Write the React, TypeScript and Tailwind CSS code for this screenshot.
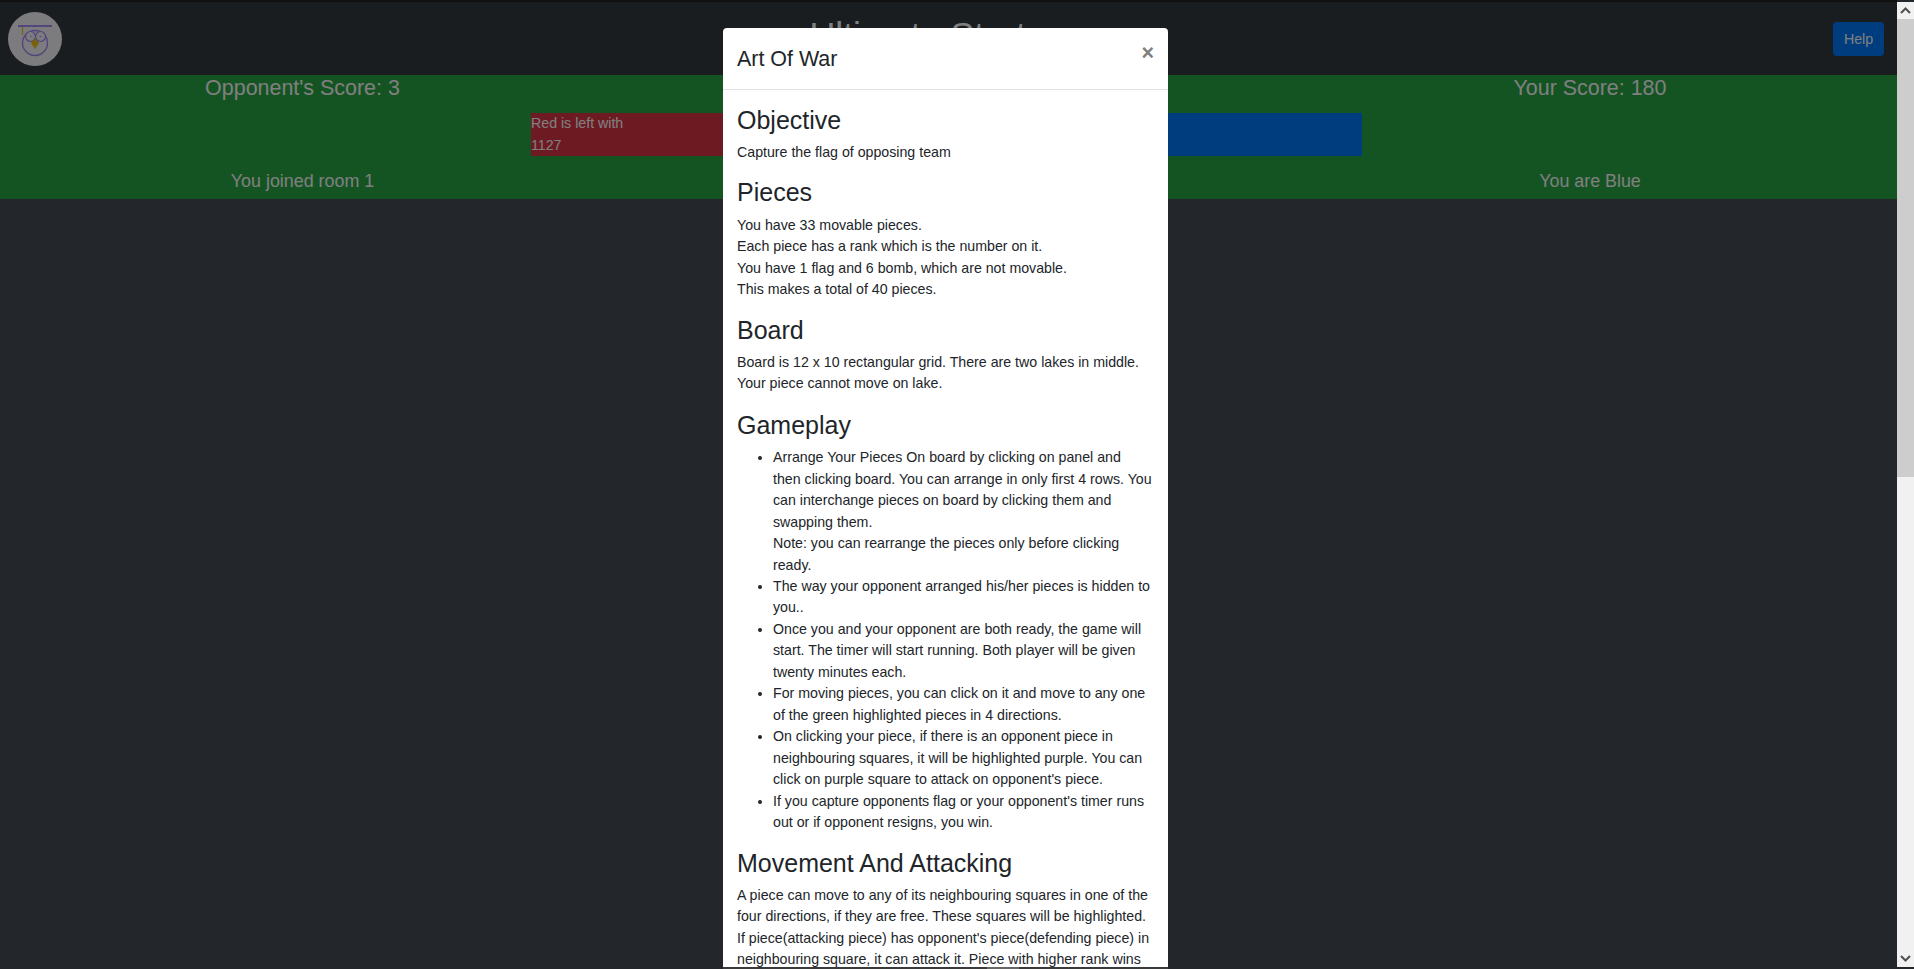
import React from "react";

const gameplay: string[][] = [
  [
    "Arrange Your Pieces On board by clicking on panel and",
    "then clicking board. You can arrange in only first 4 rows. You can interchange pieces on board by clicking them and swapping them.",
    "Note: you can rearrange the pieces only before clicking ready.",
  ],
  ["The way your opponent arranged his/her pieces is hidden to you.."],
  ["Once you and your opponent are both ready, the game will start. The timer will start running. Both player will be given twenty minutes each."],
  ["For moving pieces, you can click on it and move to any one of the green highlighted pieces in 4 directions."],
  ["On clicking your piece, if there is an opponent piece in neighbouring squares, it will be highlighted purple. You can click on purple square to attack on opponent's piece."],
  ["If you capture opponents flag or your opponent's timer runs out or if opponent resigns, you win."],
];

function OwlLogo() {
  return (
    <svg viewBox="0 0 54 54" className="w-[54px] h-[54px] rounded-full bg-[#f8f8ff] shrink-0">
      <rect x="10" y="13" width="34" height="2" fill="#a68cf8" />
      <path d="M14.5 15v8" stroke="#f5c518" strokeWidth="1.2" fill="none" />
      <circle cx="27" cy="31" r="12.5" stroke="#a68cf8" strokeWidth="1.4" fill="none" />
      <circle cx="22.5" cy="24.5" r="5" stroke="#a68cf8" strokeWidth="1.2" fill="#f8f8ff" />
      <circle cx="32.5" cy="24.5" r="5" stroke="#a68cf8" strokeWidth="1.2" fill="#f8f8ff" />
      <path d="M22 24.5h1.5M31.5 24.5h2" stroke="#a68cf8" strokeWidth="1.2" fill="none" />
      <path d="M27 26.5l4 4.5-4 6-4-6z" fill="#f5c518" />
    </svg>
  );
}

function Arrow({ up }: { up: boolean }) {
  return (
    <svg viewBox="0 0 17 17" className="w-[17px] h-[17px]">
      <path d={up ? "M4 11l4.5-4.5L13 11" : "M4 6l4.5 4.5L13 6"} stroke="#505050" strokeWidth="2" fill="none" />
    </svg>
  );
}

export default function App() {
  return (
    <div className="h-[969px] overflow-hidden bg-[#464e56] text-white font-['Liberation_Sans',Arial,sans-serif] text-[14.2px] leading-[21.45px]">
      <div className="mr-[17px]">
        <nav className="h-[75px] bg-[#343a40] border-t-2 border-[#222] flex items-center justify-between pl-2 pr-[13px]">
          <OwlLogo />
          <h1 className="text-[35.75px] leading-[43px] text-white mb-[7px]">Ultimate Stratego</h1>
          <button className="h-[34px] w-[51px] pt-[2px] rounded-[4px] bg-[#007bff] text-white text-[14.2px]">Help</button>
        </nav>
        <section className="h-[124px] pt-px bg-[#28a745]">
          <div className="flex">
            <h4 className="w-[605px] text-center text-[21.45px] leading-[25.74px]">Opponent's Score: 3</h4>
            <div className="flex-1" />
            <h4 className="w-[614px] text-center text-[21.45px] leading-[25.74px]">Your Score: 180</h4>
          </div>
          <div className="flex mt-[11px] ml-[531px] w-[831px] h-[43px]">
            <div className="w-[415px] bg-[#dc3545]">
              <div>Red is left with</div>
              <div className="mt-px">1127</div>
            </div>
            <div className="flex-1 bg-[#007bff]" />
          </div>
          <div className="flex mt-[15px]">
            <h5 className="w-[605px] text-center text-[17.875px] leading-[21.45px]">You joined room 1</h5>
            <div className="flex-1" />
            <h5 className="w-[614px] text-center text-[17.875px] leading-[21.45px]">You are Blue</h5>
          </div>
        </section>
      </div>

      {/* backdrop */}
      <div className="fixed inset-0 bg-black/50" />

      {/* modal, clipped by the window */}
      <div className="fixed top-0 left-0 right-0 h-[967px] overflow-hidden">
        <div className="mt-[28px] ml-[723px] w-[445px] bg-white text-[#212529] rounded-[4px]">
          <div className="flex justify-between h-[62px] border-b border-[#dee2e6] pl-[14px] pr-[14px] pt-[15px]">
            <h4 className="text-[21.45px] leading-[32px]">Art Of War</h4>
            <span className="text-[21.45px] leading-[32px] -mt-[6px] font-bold text-[#7f7f7f]">×</span>
          </div>
          <div className="px-[14px] pt-[14.5px]">
            <h3 className="text-[25px] leading-[30.03px] mb-[7.15px]">Objective</h3>
            <p className="mb-[14.3px]">Capture the flag of opposing team</p>
            <h3 className="text-[25px] leading-[30.03px] mb-[7.15px]">Pieces</h3>
            <p className="mb-[14.3px]">
              You have 33 movable pieces.
              <br />
              Each piece has a rank which is the number on it.
              <br />
              You have 1 flag and 6 bomb, which are not movable.
              <br />
              This makes a total of 40 pieces.
            </p>
            <h3 className="text-[25px] leading-[30.03px] mb-[7.15px]">Board</h3>
            <p className="mb-[15.3px]">Board is 12 x 10 rectangular grid. There are two lakes in middle. Your piece cannot move on lake.</p>
            <h3 className="text-[25px] leading-[30.03px] mb-[7.15px]">Gameplay</h3>
            <ul className="list-disc pl-[36px] mb-[14.3px]">
              {gameplay.map((lines, i) => (
                <li key={i}>
                  {lines.map((line, j) => (
                    <div key={j}>{line}</div>
                  ))}
                </li>
              ))}
            </ul>
            <h3 className="text-[25px] leading-[30.03px] mb-[7.15px]">Movement And Attacking</h3>
            <p>
              A piece can move to any of its neighbouring squares in one of the four directions, if they are free. These squares will be highlighted. If piece(attacking piece) has opponent's piece(defending piece) in neighbouring square, it can attack it. Piece with higher rank wins
            </p>
          </div>
        </div>
      </div>

      {/* strip along the bottom edge of the window */}
      <div className="fixed bottom-0 left-0 right-0 h-[2px]">
        <div className="ml-[723px] w-[445px] h-[2px] bg-[#3a3a3a]">
          <div className="ml-[264px] w-[32px] h-[2px] bg-[#666]" />
        </div>
      </div>

      {/* scrollbar of the modal */}
      <div className="fixed top-[2px] right-0 h-[965px] w-[17px] bg-[#f1f1f1] flex flex-col justify-between">
        <div>
          <Arrow up />
          <div className="h-[458px] bg-[#cdcdcd]" />
        </div>
        <Arrow up={false} />
      </div>
    </div>
  );
}
